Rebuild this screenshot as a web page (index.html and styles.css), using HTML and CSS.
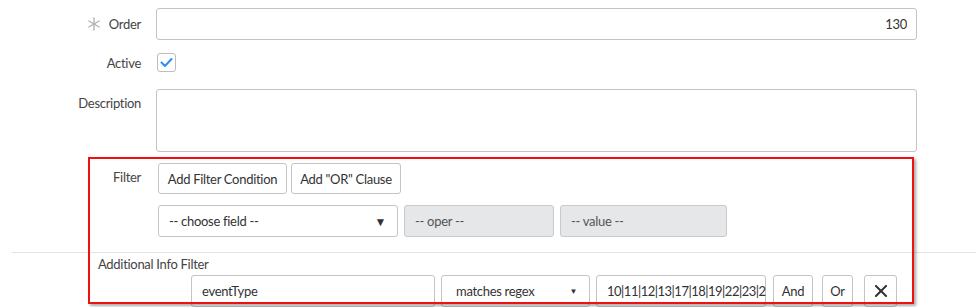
FILE: index.html
```html
<!DOCTYPE html>
<html>
<head>
<meta charset="utf-8">
<link rel="stylesheet" href="styles.css">
</head>
<body>
<div class="page">
  <div class="row row-order">
    <div class="lbl"><svg class="req" width="14" height="14" viewBox="0 0 14 14"><g stroke="#b3b3b3" stroke-width="1.4" stroke-linecap="round"><line x1="7" y1="1" x2="7" y2="13"/><line x1="1.8" y1="4" x2="12.2" y2="10"/><line x1="1.8" y1="10" x2="12.2" y2="4"/></g></svg><span>Order</span></div>
    <input class="field num" value="130">
  </div>
  <div class="row row-active">
    <div class="lbl">Active</div>
    <span class="check"><svg width="17" height="17" viewBox="0 0 17 17"><polyline points="3.5,8.5 7,12 13.5,5" fill="none" stroke="#2b8ef0" stroke-width="2" stroke-linecap="round" stroke-linejoin="round"/></svg></span>
  </div>
  <div class="row row-desc">
    <div class="lbl lbl-top">Description</div>
    <div class="field area"></div>
  </div>
  <div class="row row-filter">
    <div class="lbl lbl-top">Filter</div>
    <div class="filter-body">
      <div class="btns">
        <button class="btn btn-add">Add Filter Condition</button>
        <button class="btn btn-or">Add "OR" Clause</button>
      </div>
      <div class="conds">
        <div class="sel sel-field"><span>-- choose field --</span><span class="arrow">&#9660;</span></div>
        <div class="sel sel-dis sel-oper"><span>-- oper --</span></div>
        <div class="sel sel-dis sel-value"><span>-- value --</span></div>
      </div>
    </div>
  </div>
  <div class="sep"></div>
  <div class="addl">
    <div class="addl-label">Additional Info Filter</div>
    <div class="addl-row">
      <input class="field in-type" value="eventType">
      <div class="sel sel-op"><span>matches regex</span><span class="arrow arrow-sm">&#9660;</span></div>
      <div class="field in-val"><span>10|11|12|13|17|18|19|22|23|2</span></div>
      <button class="btn btn-and">And</button>
      <button class="btn btn-orr">Or</button>
      <button class="btn btn-x"><svg width="12" height="12" viewBox="0 0 12 12"><g stroke="#333" stroke-width="2" stroke-linecap="square"><line x1="1" y1="1" x2="11" y2="11"/><line x1="11" y1="1" x2="1" y2="11"/></g></svg></button>
    </div>
  </div>
  <div class="annot"></div>
</div>
</body>
</html>
```
FILE: styles.css
```css
* { box-sizing: border-box; }
html, body { margin: 0; padding: 0; background: #fff; }
body {
  font-family: Lato, "Liberation Sans", sans-serif;
  font-size: 13px;
  letter-spacing: -0.3px;
  color: #333;
  overflow: hidden;
}
.page {
  position: relative;
  width: 976px;
  height: 307px;
  padding-top: 8px;
}
.row { display: flex; }
.lbl {
  width: 141px;
  margin-right: 15px;
  text-align: right;
  color: #444;
  line-height: 16px;
  display: flex;
  align-items: center;
  justify-content: flex-end;
}
.lbl-top { align-items: flex-start; padding-top: 6px; }
.req { margin-right: 8px; }
.field {
  border: 1px solid #c4c4c4;
  border-radius: 3px;
  background: #fff;
  font-family: inherit;
  font-size: 13px;
  letter-spacing: -0.3px;
  color: #333;
  outline: none;
}
.row-order .field { width: 761px; height: 32px; }
.num { text-align: right; padding: 0 9px 0 10px; }
.row-active { margin-top: 13px; align-items: center; height: 19px; }
.check {
  width: 19px; height: 19px;
  border: 1px solid #bdbdbd;
  border-radius: 3px;
  margin-left: 1px;
  display: flex;
}
.row-desc { margin-top: 17px; }
.area { width: 761px; height: 63px; }
.row-filter { margin-top: 11px; }
.filter-body { margin-left: 2px; }
.btns { display: flex; gap: 4px; }
.btn {
  height: 31px;
  border: 1px solid #c4c4c4;
  border-radius: 3px;
  background: #fff;
  font-family: inherit;
  font-size: 13px;
  letter-spacing: -0.3px;
  color: #333;
  padding: 0;
  display: flex;
  align-items: center;
  justify-content: center;
}
.btn-add { width: 129px; }
.btn-or { width: 110px; }
.conds { display: flex; gap: 6px; margin-top: 11px; }
.sel {
  height: 32px;
  border: 1px solid #c4c4c4;
  border-radius: 3px;
  background: #fff;
  display: flex;
  align-items: center;
  justify-content: space-between;
  padding: 0 10px;
  color: #333;
}
.sel-field { width: 240px; padding-right: 11px; }
.arrow { font-size: 12px; color: #333; }
.sel-dis { background: #e6e7e9; border-color: #c9cacc; color: #555; }
.sel-oper { width: 150px; }
.sel-value { width: 167px; }
.sep {
  margin-top: 15px;
  margin-left: 12px;
  height: 1px;
  background: #e3e3e3;
}
.addl-label {
  margin-top: 3px;
  margin-left: 98px;
  line-height: 16px;
  color: #444;
}
.addl-row {
  display: flex;
  margin-top: 3px;
  margin-left: 191px;
}
.addl-row .field, .addl-row .sel, .addl-row .btn { height: 32px; }
.in-type { width: 244px; padding: 0 10px; }
.sel-op { width: 149px; margin-left: 6px; padding: 0 10px 0 14px; }
.arrow-sm { font-size: 8px; margin-right: 2px; }
.in-val {
  width: 170px;
  margin-left: 6px;
  padding: 0 0 0 10px;
  display: flex;
  align-items: center;
  white-space: nowrap;
  letter-spacing: -0.5px;
}
.btn-and { width: 40px; margin-left: 7px; }
.btn-orr { width: 31px; margin-left: 9px; }
.btn-x { width: 33px; margin-left: 11px; }
.annot {
  position: absolute;
  left: 88px;
  top: 157px;
  width: 826px;
  height: 147px;
  border: 2px solid #ee1111;
  box-shadow: 2px 2px 3px rgba(0,0,0,0.35);
  pointer-events: none;
}
```
